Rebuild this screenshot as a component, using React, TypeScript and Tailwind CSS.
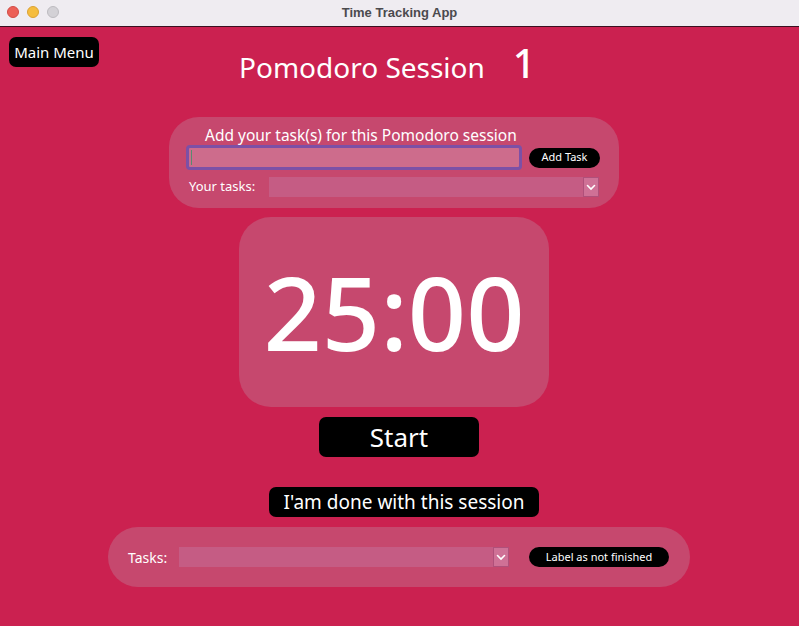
import React from 'react';

const comic = { fontFamily: '"Comic Sans MS", "Noto Sans", sans-serif' };

function Combo({ width }: { width: string }) {
  return (
    <div className={`flex h-[20px] ${width} bg-[#c55c84]`}>
      <div className="flex-1" />
      <div className="flex w-[16px] items-center justify-center border border-[#b0507a] bg-[#cf7196]">
        <svg width="10" height="7" viewBox="0 0 10 7">
          <path d="M1.5 1.5 L5 5 L8.5 1.5" stroke="white" strokeWidth="1.6" fill="none" strokeLinecap="round" />
        </svg>
      </div>
    </div>
  );
}

export default function App() {
  return (
    <div className="w-[799px] h-[626px] overflow-hidden bg-[#cb2150]" style={comic}>
      {/* Window title bar */}
      <header className="relative flex h-[27px] items-center justify-center border-b border-[#3a1020] bg-[#efecf1]">
        <div className="absolute left-[7px] top-[6px] flex gap-[8px]">
          <span className="h-[12px] w-[12px] rounded-full bg-[#ec5f57] border border-[#d24b45]" />
          <span className="h-[12px] w-[12px] rounded-full bg-[#f5bd3f] border border-[#dca233]" />
          <span className="h-[12px] w-[12px] rounded-full bg-[#d3d1d6] border border-[#bdbbc0]" />
        </div>
        <span
          className="text-[13px] font-bold text-[#4b4a4e]"
          style={{ fontFamily: '"Liberation Sans", Arial, sans-serif' }}
        >
          Time Tracking App
        </span>
      </header>

      {/* Top row */}
      <div className="flex h-[90px] items-start">
        <button className="ml-[9px] mt-[10px] h-[30px] w-[90px] rounded-[7px] bg-black text-[15px] text-white">
          Main Menu
        </button>
        <div className="ml-[140px] mt-[16px] flex h-[40px] items-baseline text-white">
          <span className="text-[28px] leading-[40px]">Pomodoro Session</span>
          <span className="ml-[28px] text-[40px] font-medium leading-[40px]">1</span>
        </div>
      </div>

      {/* Add task panel */}
      <section className="ml-[169px] h-[91px] w-[450px] rounded-[30px] bg-[#c6486e] pt-[9px]">
        <p className="ml-[36px] text-[15.5px] leading-[19px] text-white">
          Add your task(s) for this Pomodoro session
        </p>
        <div className="flex items-center">
          <div className="ml-[17px] h-[25px] w-[336px] rounded-[4px] border-[3px] border-[#7c50a6] bg-[#cd6c8c]">
            <div className="ml-[2px] mt-[2px] h-[15px] w-px bg-[#5a8a70]" />
          </div>
          <button className="ml-[7px] h-[20px] w-[71px] rounded-full bg-black text-[11px] text-white">
            Add Task
          </button>
        </div>
        <div className="mt-[7px] flex items-center">
          <span className="ml-[20px] w-[80px] text-[13px] text-white">Your tasks:</span>
          <Combo width="w-[330px]" />
        </div>
      </section>

      {/* Timer */}
      <div className="ml-[239px] mt-[9px] flex h-[190px] w-[310px] items-center justify-center rounded-[32px] bg-[#c6486e]">
        <span className="text-[102px] font-medium leading-none text-white">25:00</span>
      </div>

      <button className="ml-[319px] mt-[10px] block h-[40px] w-[160px] rounded-[7px] bg-black text-[26px] text-white">
        Start
      </button>

      <button className="ml-[269px] mt-[30px] block h-[30px] w-[270px] rounded-[7px] bg-black text-[19px] text-white">
        I'am done with this session
      </button>

      {/* Bottom panel */}
      <section className="ml-[108px] mt-[10px] flex h-[60px] w-[582px] items-center rounded-full bg-[#c6486e]">
        <span className="ml-[20px] w-[51px] text-[14px] text-white">Tasks:</span>
        <Combo width="w-[330px]" />
        <button className="ml-[20px] h-[20px] w-[140px] rounded-full bg-black text-[11px] text-white">
          Label as not finished
        </button>
      </section>
    </div>
  );
}
